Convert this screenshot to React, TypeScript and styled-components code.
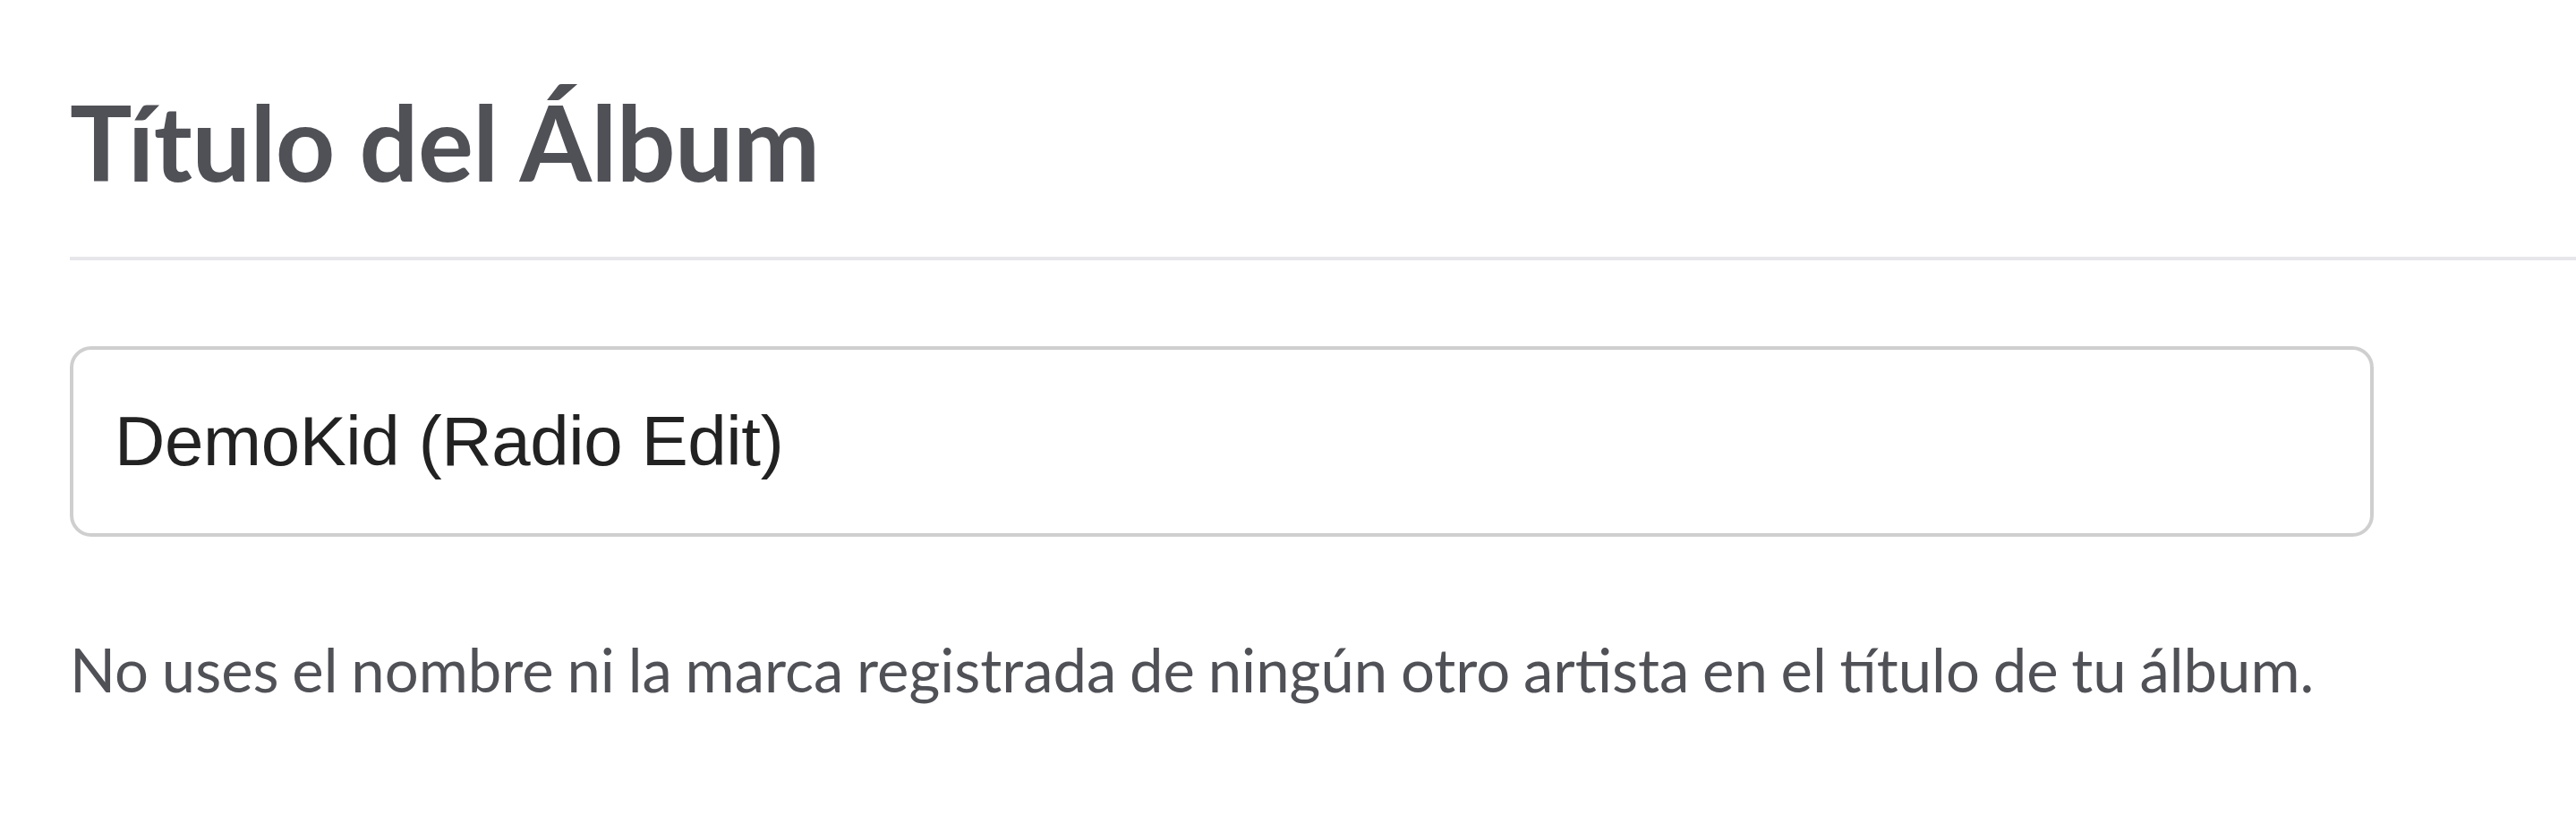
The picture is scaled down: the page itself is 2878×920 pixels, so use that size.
import React from "react";
import styled, { createGlobalStyle } from "styled-components";

const Global = createGlobalStyle`
  html, body { margin: 0; padding: 0; background: #ffffff; }
  body { font-family: Lato, "Noto Sans", sans-serif; }
`;

const Page = styled.main`
  padding: 89px 0 0 78px;
  box-sizing: border-box;
  width: 2878px;
  display: flex;
  flex-direction: column;
`;

const Title = styled.h1`
  margin: 0;
  font-family: Lato, "Noto Sans", sans-serif;
  font-weight: 700;
  font-size: 116px;
  line-height: 140px;
  letter-spacing: -0.5px;
  color: #505157;
`;

const Divider = styled.hr`
  margin: 58px 0 0 0;
  border: 0;
  height: 4px;
  background: #e6e6eb;
`;

const Field = styled.input`
  margin-top: 96px;
  width: 2574px;
  height: 213px;
  box-sizing: border-box;
  padding: 0 46px;
  border: 4px solid #cfcfcf;
  border-radius: 24px;
  background: #fff;
  font-family: "Liberation Sans", Arial, sans-serif;
  font-size: 78px;
  letter-spacing: -0.35px;
  color: #222222;
  outline: none;
`;

const Help = styled.p`
  margin: 108px 0 0 0;
  font-family: Lato, "Noto Sans", sans-serif;
  font-weight: 400;
  font-size: 67px;
  line-height: 80px;
  word-spacing: -2.4px;
  color: #505157;
`;

export default function App() {
  return (
    <>
      <Global />
      <Page>
        <Title>Título del Álbum</Title>
        <Divider />
        <Field type="text" readOnly defaultValue="DemoKid (Radio Edit)" />
        <Help>No uses el nombre ni la marca registrada de ningún otro artista en el título de tu álbum.</Help>
      </Page>
    </>
  );
}
